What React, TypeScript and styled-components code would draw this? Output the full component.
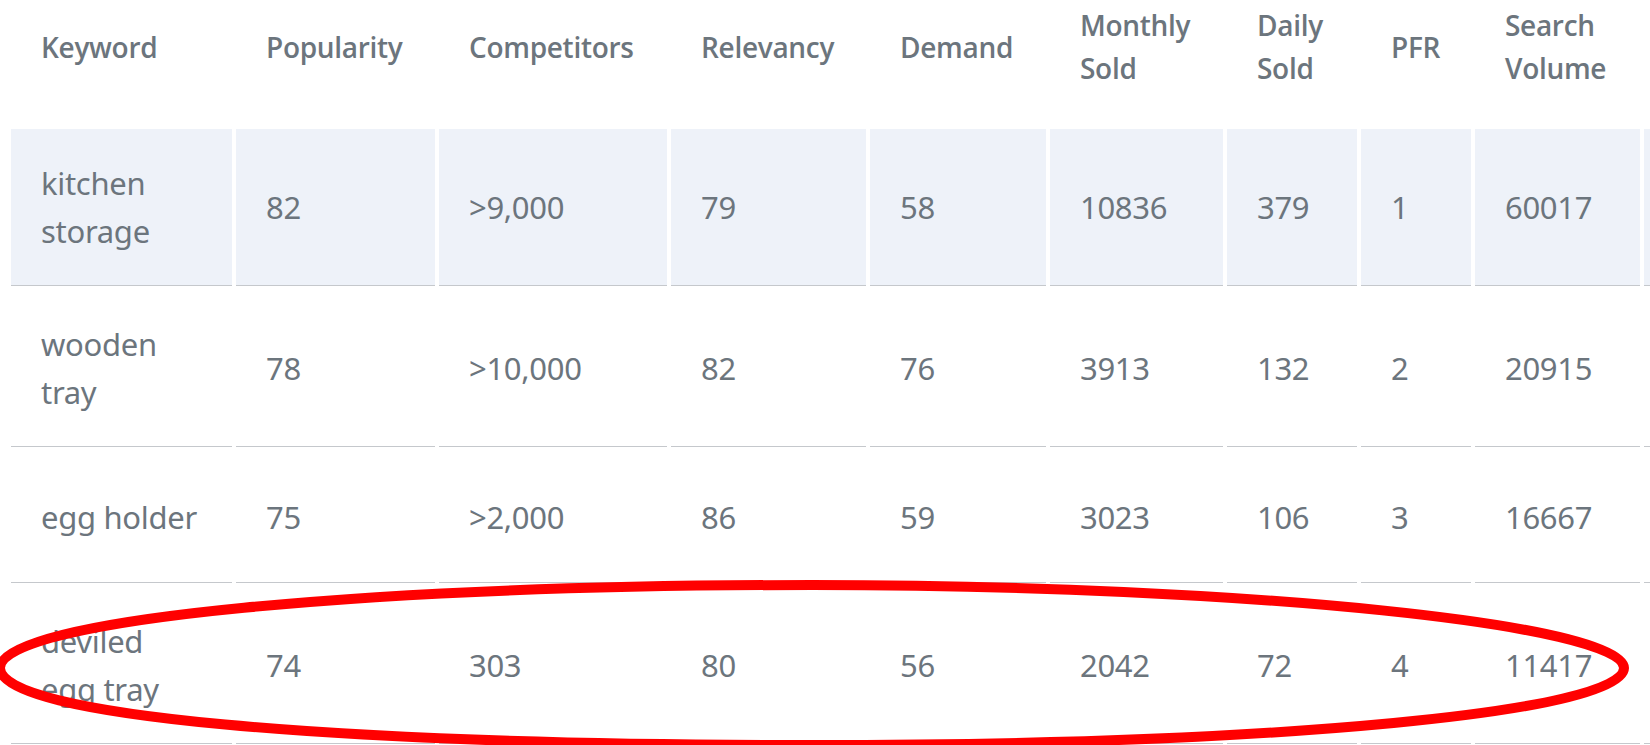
import React from 'react';
import styled, { createGlobalStyle } from 'styled-components';

const GlobalStyle = createGlobalStyle`
  html, body {
    margin: 0;
    padding: 0;
    background: #ffffff;
    overflow: hidden;
  }
`;

type KeywordRow = {
  keyword: string;
  popularity: number;
  competitors: string;
  relevancy: number;
  demand: number;
  monthly: number;
  daily: number;
  pfr: number;
  volume: number;
};

const columns = [
  { label: 'Keyword', width: 221 },
  { label: 'Popularity', width: 199 },
  { label: 'Competitors', width: 228 },
  { label: 'Relevancy', width: 195 },
  { label: 'Demand', width: 176 },
  { label: 'Monthly Sold', width: 173 },
  { label: 'Daily Sold', width: 130 },
  { label: 'PFR', width: 110 },
  { label: 'Search Volume', width: 165 },
  { label: '', width: 200 },
];

const SPACING = 4;
const tableWidth =
  columns.reduce((sum, c) => sum + c.width, 0) + SPACING * (columns.length + 1);

const rows: KeywordRow[] = [
  { keyword: 'kitchen storage', popularity: 82, competitors: '>9,000', relevancy: 79, demand: 58, monthly: 10836, daily: 379, pfr: 1, volume: 60017 },
  { keyword: 'wooden tray', popularity: 78, competitors: '>10,000', relevancy: 82, demand: 76, monthly: 3913, daily: 132, pfr: 2, volume: 20915 },
  { keyword: 'egg holder', popularity: 75, competitors: '>2,000', relevancy: 86, demand: 59, monthly: 3023, daily: 106, pfr: 3, volume: 16667 },
  { keyword: 'deviled egg tray', popularity: 74, competitors: '303', relevancy: 80, demand: 56, monthly: 2042, daily: 72, pfr: 4, volume: 11417 },
];

const Page = styled.div`
  position: relative;
  width: 1650px;
  height: 745px;
  overflow: hidden;
  background: #ffffff;
  font-family: "Noto Sans", "Open Sans", sans-serif;
  color: #6c757d;
`;

const Table = styled.table<{ $width: number }>`
  width: ${(p) => p.$width}px;
  table-layout: fixed;
  border-collapse: separate;
  border-spacing: ${SPACING}px;
  margin-left: 7px;
`;

const HeadCell = styled.th`
  box-sizing: border-box;
  height: 121px;
  padding: 0 16px 35px 30px;
  text-align: left;
  vertical-align: middle;
  font-family: "Open Sans", "Noto Sans", sans-serif;
  font-size: 28px;
  font-weight: 600;
  line-height: 43px;
  color: #6c757d;
  letter-spacing: -0.3px;
`;

const Row = styled.tr<{ $active?: boolean }>`
  td {
    background: ${(p) => (p.$active ? '#eef2f9' : '#ffffff')};
  }
`;

const Cell = styled.td<{ $keyword?: boolean }>`
  box-sizing: border-box;
  height: 132px;
  padding: 30px ${(p) => (p.$keyword ? 33 : 26)}px 30px 30px;
  vertical-align: middle;
  border-bottom: 1px solid #c5c8cc;
  font-size: 31px;
  line-height: 48px;
  letter-spacing: -0.3px;
  color: #6c757d;
`;

const Circle = styled.svg`
  position: absolute;
  left: 0;
  top: 0;
  pointer-events: none;
`;

export default function App() {
  return (
    <>
      <GlobalStyle />
      <Page>
        <Table $width={tableWidth}>
          <colgroup>
            {columns.map((c, i) => (
              <col key={i} style={{ width: c.width }} />
            ))}
          </colgroup>
          <thead>
            <tr>
              {columns.map((c, i) => (
                <HeadCell key={i}>{c.label}</HeadCell>
              ))}
            </tr>
          </thead>
          <tbody>
            {rows.map((r, i) => (
              <Row key={r.keyword} $active={i === 0}>
                <Cell $keyword>{r.keyword}</Cell>
                <Cell>{r.popularity}</Cell>
                <Cell>{r.competitors}</Cell>
                <Cell>{r.relevancy}</Cell>
                <Cell>{r.demand}</Cell>
                <Cell>{r.monthly}</Cell>
                <Cell>{r.daily}</Cell>
                <Cell>{r.pfr}</Cell>
                <Cell>{r.volume}</Cell>
                <Cell />
              </Row>
            ))}
          </tbody>
        </Table>
        <Circle width="1650" height="745" viewBox="0 0 1650 745">
          <path
            d="M 0 668 C 0 618, 380 585, 812 585 C 1250 585, 1624 625, 1624 668 C 1624 712, 1280 745, 812 745 C 330 745, 0 716, 0 668 Z"
            fill="none"
            stroke="#ff0000"
            strokeWidth="10"
          />
        </Circle>
      </Page>
    </>
  );
}
